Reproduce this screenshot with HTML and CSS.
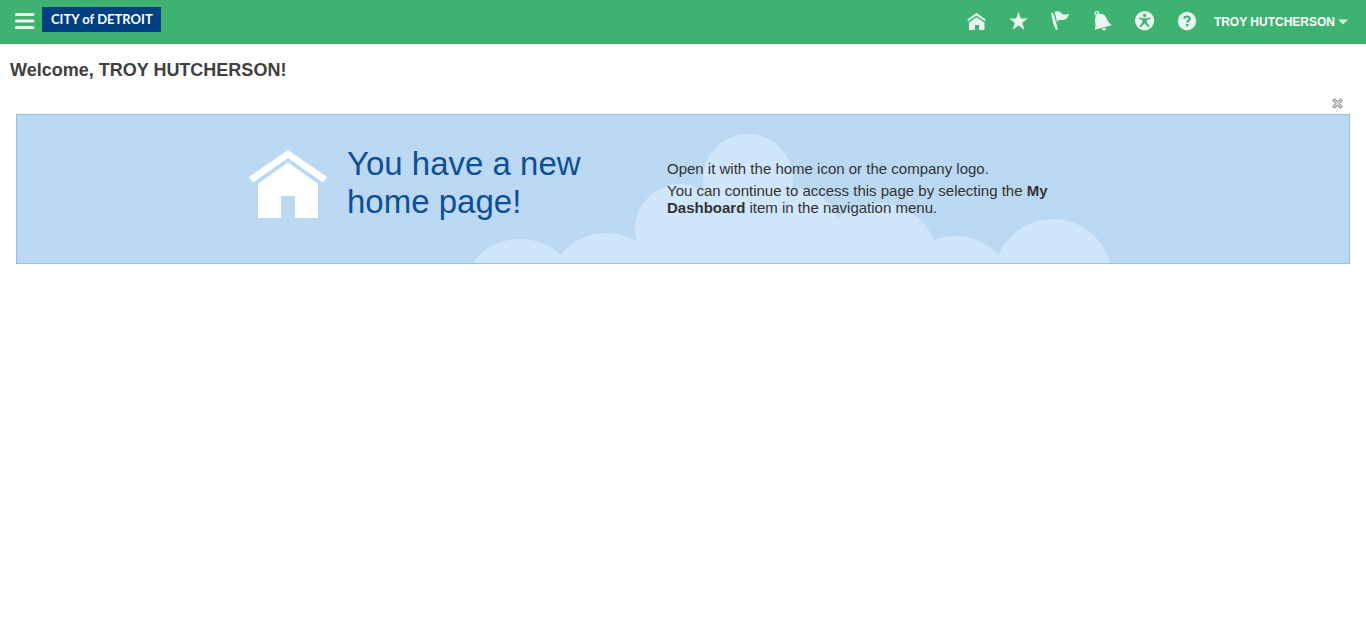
FILE: index.html
```html
<!DOCTYPE html>
<html lang="en">
<head>
<meta charset="utf-8">
<title>Welcome</title>
<link rel="stylesheet" href="styles.css">
</head>
<body>
<header class="topbar">
  <button class="icon-button menu" type="button" aria-label="Navigator">
    <svg width="20" height="16" viewBox="0 0 20 16"><path d="M1.500 1.500H18M1.500 8H18M1.500 14.500H18" stroke="currentColor" stroke-width="3" stroke-linecap="round"/></svg>
  </button>
  <a class="brand" href="#">CITY of DETROIT</a>
  <nav class="tools" aria-label="Global">
    <button class="icon-button" type="button" aria-label="Home">
      <svg width="20" height="20" viewBox="0 0 20 20" fill="currentColor"><path d="M9.500 2 18.800 8.500 17.600 10.100 9.500 4.500 1.400 10.100.2 8.500Z"/><path d="M9.500 6.200 17.500 11.500V19H12V14H8V19H2V11.500Z"/></svg>
    </button>
    <button class="icon-button" type="button" aria-label="Favorites">
      <svg width="20" height="20" viewBox="0 0 20 20" fill="currentColor"><path d="M9.500 .8 11.800 7.600H18.900L13.200 11.800 15.300 18.800 9.500 14.600 3.700 18.800 5.800 11.800.1 7.600H7.200Z"/></svg>
    </button>
    <button class="icon-button" type="button" aria-label="Watchlist">
      <svg width="20" height="20" viewBox="0 0 20 20" fill="currentColor"><path d="M.2 3Q1.500-.1 2.700 3L7 18.300 5 19.100Q1.300 12 .2 3ZM3.700 .8C6.500-.2 8.500 0 10.200 1.900 12.300 4.200 15.500 3.200 18.800 3.100 16.100 5.600 16 9 12.300 9.100 9.700 9.200 8.500 8 6 10.900Z"/></svg>
    </button>
    <button class="icon-button" type="button" aria-label="Notifications">
      <svg width="20" height="20" viewBox="0 0 20 20" fill="currentColor"><circle cx="3.800" cy="2.300" r="1.700" fill="none" stroke="currentColor" stroke-width="1.300"/><path d="M3.300 4.400C6 1.900 10.500 2.300 12.600 5.600L15.500 11 18.800 14.200 1.800 18.700 2.500 14.300C2.300 10.500 1.300 7.100 3.300 4.400ZM8.500 17.700 12.800 16.700Q13.500 19.500 11 19.500 9 19.500 8.500 17.700Z"/></svg>
    </button>
    <button class="icon-button" type="button" aria-label="Accessibility">
      <svg width="20" height="20" viewBox="0 0 20 20"><circle cx="9.600" cy="9.600" r="9.600" fill="currentColor"/><circle class="cut" cx="9.600" cy="4.400" r="1.600"/><path class="cut" d="M4 6.500 8 7.200H11.300L15.300 6.500V7.700L11.800 8.900V11.200L14.800 15.500 13.200 16.200 9.600 12.200 6 16.200 4.500 15.500 7.400 11.200V8.900L4 7.700Z"/></svg>
    </button>
    <button class="icon-button" type="button" aria-label="Help">
      <svg width="20" height="20" viewBox="0 0 20 20"><circle cx="10" cy="10" r="9.200" fill="currentColor"/><path class="cut-line" d="M7.300 7.800C7.300 4.700 12.800 4.700 12.800 7.700 12.800 9.700 10.200 9.500 10.200 11.700"/><rect class="cut" x="9" y="13" width="2.400" height="2.200"/></svg>
    </button>
    <button class="user" type="button">TROY HUTCHERSON
      <svg width="10" height="6" viewBox="0 0 10 6" fill="currentColor"><path d="M0 .5H10L5 5.500Z"/></svg>
    </button>
  </nav>
</header>
<main>
  <h1 class="welcome">Welcome, TROY HUTCHERSON!</h1>
  <div class="panel">
    <button class="close" type="button" aria-label="Close">
      <svg width="11" height="11" viewBox="0 0 11 11"><path d="M2.500 1 5.500 3.800 8.500 1 10 2.500 7.200 5.500 10 8.500 8.500 10 5.500 7.200 2.500 10 1 8.500 3.800 5.500 1 2.500Z" fill="#eee" stroke="#555"/></svg>
    </button>
    <section class="banner">
      <div class="announcement">
        <svg class="clouds" width="640" height="130" viewBox="471 133 640 130" fill="#d0e6fb" aria-hidden="true">
          <circle cx="748" cy="179" r="45"/><circle cx="680" cy="229" r="45"/><circle cx="793" cy="237" r="49"/><circle cx="878" cy="264" r="61"/><circle cx="955" cy="294" r="58"/><circle cx="1053" cy="278" r="59"/><circle cx="520" cy="299" r="60"/><circle cx="606" cy="292" r="59"/><path d="M636 240 690 200H790L840 240V263H636Z"/>
        </svg>
        <svg class="house" width="78" height="70" viewBox="0 0 78 70" fill="#fff" aria-hidden="true"><path d="M39 0 78 27 74 32.500 39 8 4 32.500 0 27Z"/><path d="M39 12.500 69 34V68H46V46H32V68H9V34Z"/></svg>
        <h2 class="title">You have a new<br>home page!</h2>
        <div class="details">
          <p>Open it with the home icon or the company logo.</p>
          <p>You can continue to access this page by selecting the <strong>My Dashboard</strong> item in the navigation menu.</p>
        </div>
      </div>
    </section>
  </div>
</main>
</body>
</html>
```
FILE: styles.css
```css
* {
  box-sizing: border-box;
}

body {
  margin: 0;
  background: #fff;
  color: #333;
  font-family: "Liberation Sans", Arial, sans-serif;
}

button {
  padding: 0;
  border: 0;
  background: none;
  font: inherit;
  color: inherit;
  cursor: pointer;
}

svg {
  display: block;
}

.topbar {
  display: flex;
  align-items: flex-start;
  height: 44px;
  padding: 0 18px 0 15px;
  background: #3eb371;
  color: #e8f6ee;
}

.menu {
  margin-top: 13px;
}

.brand {
  margin: 7px 0 0 7px;
  padding: 0 8px 0 9px;
  background: #004080;
  color: #fff;
  font: bold 13px/25px Lato, sans-serif;
  text-decoration: none;
  white-space: nowrap;
}

.tools {
  display: flex;
  align-items: center;
  gap: 22px;
  margin: 11px 0 0 auto;
}

.user {
  display: flex;
  align-items: center;
  gap: 3px;
  margin-left: -5px;
  padding-top: 2px;
  color: #fff;
  font-size: 12px;
  font-weight: bold;
  white-space: nowrap;
}

.user svg {
  color: #d8f0e3;
}

.cut {
  fill: #3eb371;
}

.cut-line {
  fill: none;
  stroke: #3eb371;
  stroke-width: 2;
}

.welcome {
  margin: 0;
  padding: 15px 10px 0;
  color: #404040;
  font-size: 18px;
  line-height: 22px;
}

.panel {
  padding: 17px 16px;
}

.close {
  display: block;
  margin: 0 7px 5px auto;
}

.banner {
  overflow: hidden;
  border: 1px solid #94c3e2;
  background: #bbd9f3;
}

.announcement {
  position: relative;
  display: flex;
  align-items: flex-start;
  max-width: 868px;
  min-height: 148px;
  margin: 0 auto;
}

.clouds {
  position: absolute;
  right: 6px;
  bottom: 0;
}

.house,
.title,
.details {
  position: relative;
}

.house {
  flex: none;
  margin-top: 35px;
}

.title {
  flex: none;
  width: 320px;
  margin: 30px 0 0 20px;
  color: #0f4f96;
  font-size: 33px;
  font-weight: normal;
  line-height: 38px;
}

.details {
  width: 400px;
  padding-top: 45px;
  font-size: 15px;
  line-height: 17px;
}

.details p {
  margin: 0 0 5px;
}
```
